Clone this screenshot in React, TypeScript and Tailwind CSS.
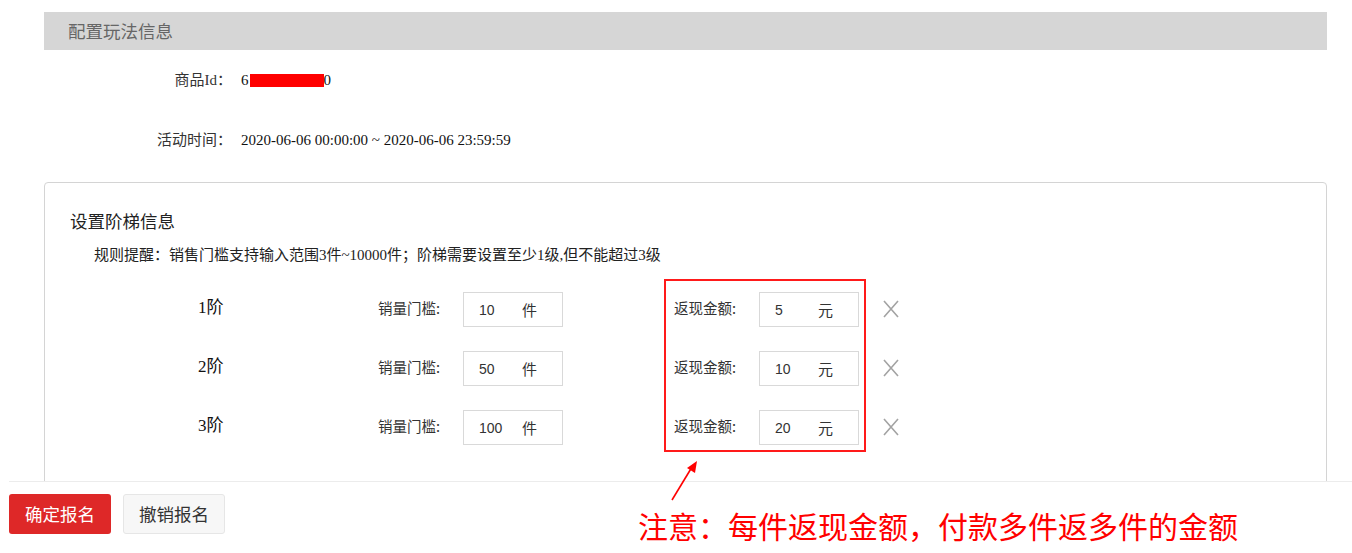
import React from 'react';

const serif = 'font-["Liberation_Serif","Noto_Sans_CJK_SC",serif]';

interface Tier {
  level: number;
  count: number;
  cash: number;
}

const tiers: Tier[] = [
  { level: 1, count: 10, cash: 5 },
  { level: 2, count: 50, cash: 10 },
  { level: 3, count: 100, cash: 20 },
];

const CloseIcon: React.FC = () => (
  <svg width="16" height="18" viewBox="0 0 16 18" fill="none">
    <path d="M1 1L15 17M15 1L1 17" stroke="#a3a3a3" strokeWidth="1.6" />
  </svg>
);

const UnitInput: React.FC<{ value: number; unit: string }> = ({ value, unit }) => (
  <div className="flex h-[35px] w-[100px] items-center border border-[#d9d9d9] pl-[15px] pt-[2px] text-[14px] text-[#333]">
    <span className='w-[43px] font-["Liberation_Sans","Noto_Sans_CJK_SC",sans-serif]'>{value}</span>
    <span className='font-["Noto_Sans_CJK_SC",sans-serif] text-[15px]'>{unit}</span>
  </div>
);

const App: React.FC = () => {
  return (
    <div className={`relative h-[553px] w-[1352px] overflow-hidden bg-white text-[15px] text-[#333] ${serif}`}>
      <div className="pl-[44px] pr-[25px] pt-[12px]">
        <div className='flex h-[38px] items-center bg-[#d6d6d6] pl-[24px] font-["Noto_Sans_CJK_SC",sans-serif] text-[17.5px] text-[#666]'>
          配置玩法信息
        </div>

        <div className="mt-[18px] flex h-[24px] items-center">
          <span className="w-[188px] text-right">商品Id：</span>
          <span className="ml-[9px] flex items-center text-[#111]">
            6<span className="ml-[1px] inline-block h-[13px] w-[74px] bg-[#ff0000]" />0
          </span>
        </div>

        <div className="mt-[36px] flex h-[24px] items-center">
          <span className="w-[188px] text-right">活动时间：</span>
          <span className="ml-[9px] text-[#111]">2020-06-06 00:00:00 ~ 2020-06-06 23:59:59</span>
        </div>

        <div className="mt-[30px] h-[400px] rounded-[4px] border border-[#d4d4d4]">
          <div className='mt-[26px] flex h-[24px] items-center pl-[25px] font-["Noto_Sans_CJK_SC",sans-serif] text-[17.5px] text-[#222]'>
            设置阶梯信息
          </div>
          <div className="mt-[12px] flex h-[20px] items-center pl-[49px] text-[#222]">
            规则提醒：销售门槛支持输入范围3件~10000件；阶梯需要设置至少1级,但不能超过3级
          </div>

          <div className="mt-[14px] flex items-start">
            <div className="flex flex-col gap-[24px] pl-[153px] pt-[13px]">
              {tiers.map(t => (
                <div key={t.level} className="flex h-[35px] items-center">
                  <span className="w-[180px] pb-[3px] text-[17px] text-[#111]">{t.level}阶</span>
                  <span className='w-[85px] pb-[4px] font-["Noto_Sans_CJK_SC",sans-serif] text-[14.5px]'>销量门槛:</span>
                  <UnitInput value={t.count} unit="件" />
                </div>
              ))}
            </div>

            <div className="ml-[101px] flex flex-col gap-[24px] border-2 border-[#ff1a1a] pb-[5px] pl-[8px] pr-[5px] pt-[11px]">
              {tiers.map(t => (
                <div key={t.level} className="flex h-[35px] items-center">
                  <span className='w-[85px] pb-[4px] font-["Noto_Sans_CJK_SC",sans-serif] text-[14.5px]'>返现金额:</span>
                  <UnitInput value={t.cash} unit="元" />
                </div>
              ))}
            </div>

            <div className="ml-[17px] flex flex-col gap-[24px] pt-[13px]">
              {tiers.map(t => (
                <div key={t.level} className="flex h-[35px] items-center pb-[1px]">
                  <CloseIcon />
                </div>
              ))}
            </div>
          </div>
        </div>
      </div>

      {/* fixed footer bar */}
      <div className='absolute bottom-0 left-[9px] right-0 top-[481px] flex gap-[12px] border-t border-[#ececec] bg-white pt-[12px] font-["Noto_Sans_CJK_SC",sans-serif] text-[17.5px]'>
        <button className="flex h-[40px] w-[102px] items-center justify-center rounded-[3px] bg-[#de2828] text-white">
          确定报名
        </button>
        <button className="flex h-[40px] w-[102px] items-center justify-center rounded-[3px] border border-[#e6e6e6] bg-[#f7f7f7] text-[#333]">
          撤销报名
        </button>
      </div>

      {/* annotation */}
      <svg className="absolute left-[660px] top-[455px]" width="50" height="50" viewBox="0 0 50 50" fill="none">
        <path d="M12 45L32 12" stroke="#ff0000" strokeWidth="1.6" />
        <path d="M37 6L27 13L35 18Z" fill="#ff0000" />
      </svg>
      <div className='absolute left-[638px] top-[507px] font-["Noto_Sans_CJK_SC",sans-serif] text-[30px] leading-[36px] text-[#ff0000]'>
        注意：每件返现金额，付款多件返多件的金额
      </div>
    </div>
  );
};

export default App;
